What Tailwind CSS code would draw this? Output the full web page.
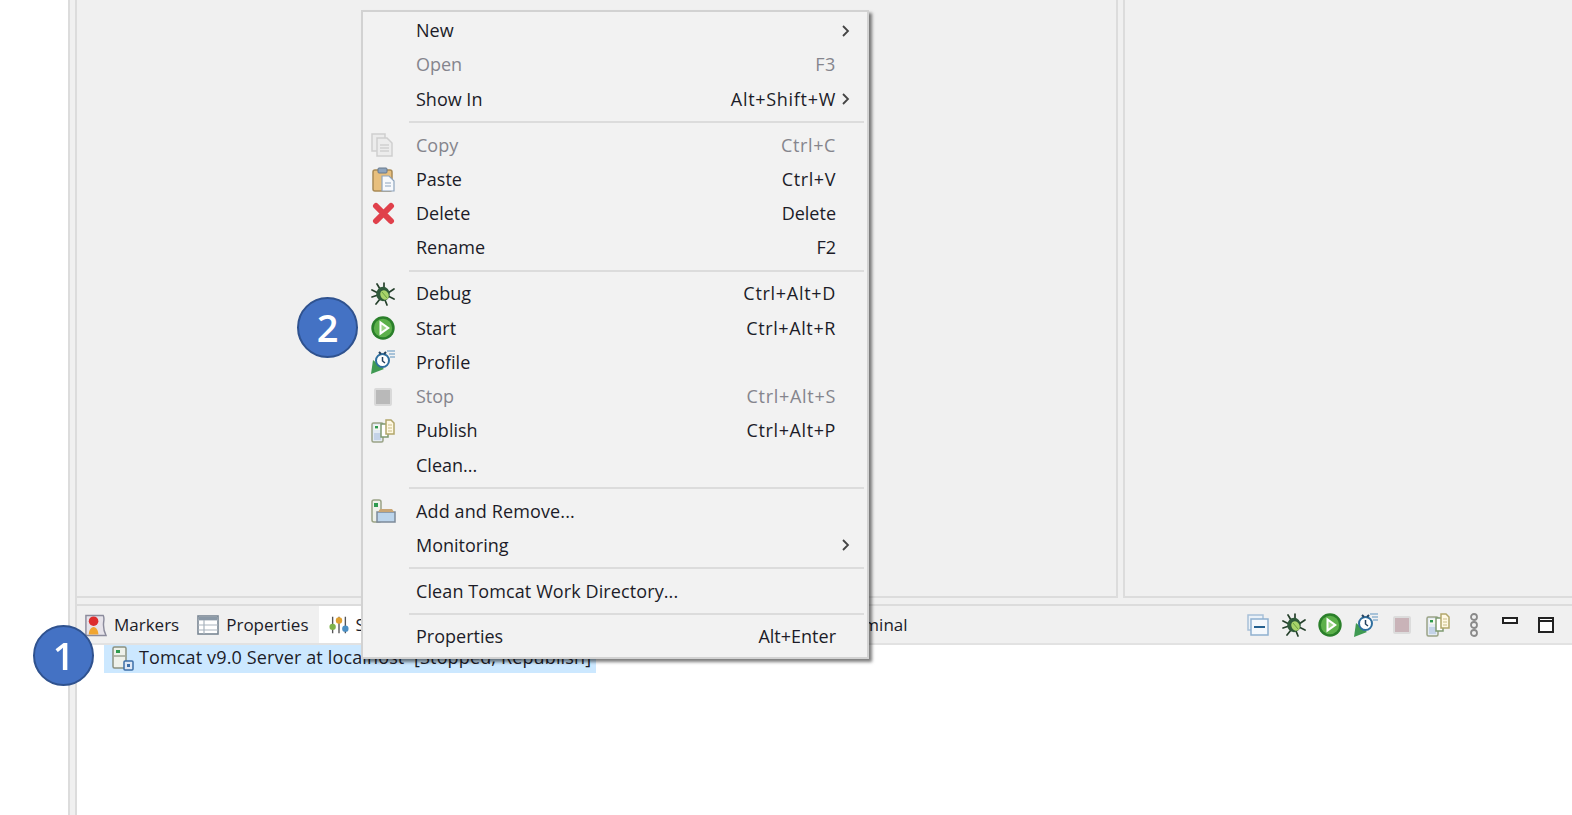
<!DOCTYPE html>
<html lang="en">
<head>
<meta charset="UTF-8">
<title>Servers context menu</title>
<script src="https://cdn.jsdelivr.net/npm/@tailwindcss/browser@4"></script>
</head>
<body class="bg-white">
<!-- shared icons -->
<svg class="hidden">
  <symbol id="i-bug" viewBox="0 0 24 24">
    <g stroke="#26402c" stroke-width="1.7" fill="none" stroke-linecap="round">
      <path d="M6 2l3 5M13 1l0 5M1 8l6 3M23 7l-6 4M1 15l6-2M23 17l-6-3M5 22l4-5M16 23l-2-5"/>
    </g>
    <ellipse cx="12" cy="12" rx="6.8" ry="7.2" fill="#2f5a3a"/>
    <ellipse cx="13.5" cy="13" rx="4" ry="5" fill="#a9d36a" transform="rotate(-30 13.5 13)"/>
    <path d="M11 10l5 6" stroke="#6ba043" stroke-width="1"/>
  </symbol>
  <symbol id="i-start" viewBox="0 0 24 24">
    <circle cx="12" cy="12" r="11.7" fill="#2a7f2a"/>
    <circle cx="12" cy="12" r="9.2" fill="#5cb04a"/>
    <path d="M8.5 4.5l10.5 7.5-10.5 7.5z" fill="#fff"/>
    <path d="M10.5 8.5l5 3.5-5 3.5z" fill="#9ed58a"/>
  </symbol>
  <symbol id="i-profile" viewBox="0 0 24 24">
    <path d="M0 24l2-14 11 9z" fill="#3f9a52"/>
    <circle cx="11.5" cy="10.5" r="6.5" fill="#fff" stroke="#2f6f9f" stroke-width="2"/>
    <path d="M11.5 7v4l2.5 2" stroke="#24425f" stroke-width="1.5" fill="none"/>
    <path d="M8 2l2 2M15 2l-2 2" stroke="#24425f" stroke-width="2"/>
    <path d="M16 1h8M18 4h6M19 7h5" stroke="#8fb3d0" stroke-width="1.3"/>
  </symbol>
  <symbol id="i-publish" viewBox="0 0 24 24">
    <rect x="1" y="4" width="11" height="19" rx="1.5" fill="#e3ebf3" stroke="#9aa386" stroke-width="1.5"/>
    <rect x="3" y="6" width="7" height="5" fill="#f5f7f0"/>
    <rect x="4" y="7" width="3" height="2.4" fill="#2d9a4e"/>
    <rect x="3" y="14" width="7" height="7" fill="#c4d3e8"/>
    <path d="M10 5h7v13h-7z" fill="#fff" stroke="#7f9a72" stroke-width="1.5"/>
    <path d="M15 1h5l3 3v11h-8z" fill="#fff8e3" stroke="#b2a66b" stroke-width="1.5"/>
    <path d="M17 6h4M17 9h4M17 12h4" stroke="#c9bd86"/>
  </symbol>
</svg>

<div class="relative w-[1572px] h-[815px] overflow-hidden flex font-['Open_Sans','Noto_Sans',sans-serif] text-[18px] text-[#1c1c28] blur-[0.4px]">
  <div class="w-[68px] shrink-0"></div>

  <!-- workbench -->
  <div class="flex-1 flex flex-col border-l-2 border-[#dcdcdc] bg-[#f0f0f0] pl-[5px]">
    <div class="flex-1 flex flex-col border-l-2 border-[#dcdcdc]">
      <div class="flex gap-[5px] h-[598px] shrink-0">
        <div class="w-[1041px] border-r-2 border-b-2 border-[#dcdcdc]"></div>
        <div class="flex-1 border-l-2 border-b-2 border-[#dcdcdc]"></div>
      </div>

      <div class="flex-1 flex flex-col mt-[6px] border-t-2 border-[#dcdcdc]">
        <!-- view tabs -->
        <div class="h-[39px] shrink-0 flex items-center border-b-2 border-[#e2e2e2] text-[17px]">
          <div class="flex items-center pl-[7px] gap-[7px]">
            <svg class="w-[23px] h-[24px]" viewBox="0 0 24 24">
              <path d="M2 2h18c3 5-3 9 3 21H2z" fill="#e6e3ea" stroke="#8b8b9c" stroke-width="1.5"/>
              <circle cx="10" cy="8" r="5" fill="#dd2c2c"/>
              <path d="M5 22c0-4 2-8 5-8s5 4 5 8z" fill="#f0a530"/>
            </svg>
            <span>Markers</span>
          </div>
          <div class="flex items-center ml-[18px] gap-[7px]">
            <svg class="w-[22px] h-[20px]" viewBox="0 0 22 20">
              <rect x="1" y="1" width="20" height="18" fill="#fff" stroke="#7a8794" stroke-width="1.6"/>
              <path d="M1 5h20M1 10h20M1 15h20M7 5v14" stroke="#a9b3bd" stroke-width="1.2"/>
              <rect x="2" y="2" width="18" height="3" fill="#8a98a6"/>
            </svg>
            <span>Properties</span>
          </div>
          <div class="flex items-center ml-[10px] h-full w-[120px] bg-white pl-[10px] gap-[7px]">
            <svg class="w-[20px] h-[20px]" viewBox="0 0 22 22">
              <path d="M4 2v18M11 2v18M18 2v18" stroke="#555" stroke-width="1.5"/>
              <circle cx="4" cy="13" r="3.5" fill="#7fb24a"/>
              <circle cx="11" cy="6" r="3.5" fill="#e0a030"/>
              <circle cx="18" cy="15" r="3.5" fill="#4a8fc4"/>
            </svg>
            <span>Servers</span>
          </div>
          <span class="ml-[399px]">Terminal</span>

          <div class="ml-auto flex items-center pr-[8px]">
            <div class="w-[36px] flex justify-center">
              <svg class="w-[22px] h-[22px]" viewBox="0 0 22 22">
                <rect x="1" y="1" width="15" height="15" fill="#eaf1f8" stroke="#a8c0d8" stroke-width="1.5"/>
                <rect x="4" y="5" width="17" height="16" fill="#f4f8fc" stroke="#8fb0cf" stroke-width="1.5"/>
                <path d="M7 13h11" stroke="#24608f" stroke-width="2"/>
              </svg>
            </div>
            <div class="w-[36px] flex justify-center"><svg class="w-[24px] h-[24px]"><use href="#i-bug"/></svg></div>
            <div class="w-[36px] flex justify-center"><svg class="w-[24px] h-[24px]"><use href="#i-start"/></svg></div>
            <div class="w-[36px] flex justify-center"><svg class="w-[24px] h-[24px]"><use href="#i-profile"/></svg></div>
            <div class="w-[36px] flex justify-center">
              <div class="w-[18px] h-[18px] bg-[#c9b3b8] border-2 border-[#dcdcdc] rounded-[2px]"></div>
            </div>
            <div class="w-[36px] flex justify-center"><svg class="w-[24px] h-[24px]"><use href="#i-publish"/></svg></div>
            <div class="w-[36px] flex justify-center">
              <svg class="w-[10px] h-[24px]" viewBox="0 0 10 24" fill="none" stroke="#8a8a8a" stroke-width="1.8">
                <circle cx="5" cy="4" r="3"/><circle cx="5" cy="12" r="3"/><circle cx="5" cy="20" r="3"/>
              </svg>
            </div>
            <div class="w-[36px] flex justify-center -mt-[9px]">
              <div class="w-[16px] h-[7px] border-2 border-[#222] bg-white"></div>
            </div>
            <div class="w-[36px] flex justify-center">
              <div class="w-[16px] h-[16px] border-2 border-[#222] bg-white">
                <div class="h-[3px] border-b-2 border-[#222]"></div>
              </div>
            </div>
          </div>
        </div>

        <!-- server list -->
        <div class="flex-1 bg-white pl-[27px]">
          <div class="w-[492px] h-[28px] flex items-center bg-[#cce8ff] pl-[8px] gap-[5px]">
            <svg class="w-[22px] h-[25px] -mt-[1px]" viewBox="0 0 22 25">
              <rect x="1" y="1" width="13" height="21" rx="1.5" fill="#eef1ea" stroke="#8b9180" stroke-width="1.5"/>
              <rect x="4" y="4" width="4" height="3" fill="#2d9a4e"/>
              <path d="M2 10h11" stroke="#8b9180" stroke-width="1.2"/>
              <rect x="12" y="15" width="9" height="9" rx="1" fill="#dfe8f5" stroke="#3d6fa8" stroke-width="1.5"/>
              <rect x="15" y="18" width="3" height="3" fill="#3d6fa8"/>
            </svg>
            <span class="tracking-[0.14px] -mt-[3px]">Tomcat v9.0 Server at localhost&nbsp; [Stopped, Republish]</span>
          </div>
        </div>
      </div>
    </div>
  </div>

  <!-- context menu -->
  <div class="absolute left-[361px] top-[10px] w-[508px] h-[649px] bg-[#f2f2f2] border-2 border-[#d2d2d2] shadow-[3px_3px_3px_rgba(0,0,0,0.5)] pt-[1.5px]">
    <div class="flex items-center h-[34.3px]"><div class="w-[53px]"></div><span class="flex-1">New</span><span class="w-[31px] pl-[5px]"><svg class="w-[10px] h-[14px]" viewBox="0 0 10 14" fill="none" stroke="#444" stroke-width="1.8"><path d="M2 2l5 5-5 5"/></svg></span></div>
    <div class="flex items-center h-[34.3px] text-[#85858d]"><div class="w-[53px]"></div><span class="flex-1">Open</span><span class="tracking-[0.6px]">F3</span><span class="w-[31px]"></span></div>
    <div class="flex items-center h-[34.3px]"><div class="w-[53px]"></div><span class="flex-1">Show In</span><span class="tracking-[0.7px]">Alt+Shift+W</span><span class="w-[31px] pl-[5px]"><svg class="w-[10px] h-[14px]" viewBox="0 0 10 14" fill="none" stroke="#444" stroke-width="1.8"><path d="M2 2l5 5-5 5"/></svg></span></div>
    <div class="h-[11.5px] flex items-center pl-[46px] pr-[3px]"><div class="w-full h-[2px] bg-[#dcdcdc]"></div></div>

    <div class="flex items-center h-[34.3px] text-[#85858d]">
      <div class="w-[53px] pl-[8px]"><svg class="w-[24px] h-[24px]" viewBox="0 0 24 24" fill="#ececec" stroke="#cfcfcf" stroke-width="1.5"><rect x="1" y="1" width="13" height="17"/><path d="M6 5h10l5 5v13H6z"/><path d="M9 12h9M9 15h9M9 18h9" fill="none"/></svg></div>
      <span class="flex-1">Copy</span><span class="tracking-[0.6px]">Ctrl+C</span><span class="w-[31px]"></span>
    </div>
    <div class="flex items-center h-[34.3px]">
      <div class="w-[53px] pl-[9px]"><svg class="w-[23px] h-[25px]" viewBox="0 0 23 25"><rect x="1" y="3" width="19" height="21" rx="2" fill="#e8bf7d" stroke="#a98a55" stroke-width="1.5"/><rect x="6" y="1" width="9" height="5" rx="1" fill="#8ea4bd" stroke="#66788c"/><path d="M10 9h7l5 5v10H10z" fill="#f7f9fc" stroke="#8ea4bd" stroke-width="1.2"/><path d="M13 16h6M13 19h6" stroke="#8ea4bd"/></svg></div>
      <span class="flex-1">Paste</span><span class="tracking-[0.6px]">Ctrl+V</span><span class="w-[31px]"></span>
    </div>
    <div class="flex items-center h-[34.3px]">
      <div class="w-[53px] pl-[9px]"><svg class="w-[23px] h-[23px]" viewBox="0 0 23 23"><path d="M4 4l15 15M19 4L4 19" stroke="#e0404b" stroke-width="6" stroke-linecap="round"/></svg></div>
      <span class="flex-1">Delete</span><span>Delete</span><span class="w-[31px]"></span>
    </div>
    <div class="flex items-center h-[34.3px]"><div class="w-[53px]"></div><span class="flex-1">Rename</span><span>F2</span><span class="w-[31px]"></span></div>
    <div class="h-[11.5px] flex items-center pl-[46px] pr-[3px]"><div class="w-full h-[2px] bg-[#dcdcdc]"></div></div>

    <div class="flex items-center h-[34.3px]">
      <div class="w-[53px] pl-[8px]"><svg class="w-[24px] h-[24px]"><use href="#i-bug"/></svg></div>
      <span class="flex-1">Debug</span><span class="tracking-[0.7px]">Ctrl+Alt+D</span><span class="w-[31px]"></span>
    </div>
    <div class="flex items-center h-[34.3px]">
      <div class="w-[53px] pl-[8px]"><svg class="w-[24px] h-[24px]"><use href="#i-start"/></svg></div>
      <span class="flex-1">Start</span><span class="tracking-[0.6px]">Ctrl+Alt+R</span><span class="w-[31px]"></span>
    </div>
    <div class="flex items-center h-[34.3px]">
      <div class="w-[53px] pl-[8px]"><svg class="w-[24px] h-[24px]"><use href="#i-profile"/></svg></div>
      <span class="flex-1">Profile</span>
    </div>
    <div class="flex items-center h-[34.3px] text-[#85858d]">
      <div class="w-[53px] pl-[11px]"><div class="w-[18px] h-[18px] bg-[#b9b9b9] border-2 border-[#d9d9d9] rounded-[2px]"></div></div>
      <span class="flex-1">Stop</span><span class="tracking-[0.7px]">Ctrl+Alt+S</span><span class="w-[31px]"></span>
    </div>
    <div class="flex items-center h-[34.3px]">
      <div class="w-[53px] pl-[8px]"><svg class="w-[24px] h-[24px]"><use href="#i-publish"/></svg></div>
      <span class="flex-1">Publish</span><span class="tracking-[0.6px]">Ctrl+Alt+P</span><span class="w-[31px]"></span>
    </div>
    <div class="flex items-center h-[34.3px]"><div class="w-[53px]"></div><span class="flex-1">Clean...</span></div>
    <div class="h-[11.5px] flex items-center pl-[46px] pr-[3px]"><div class="w-full h-[2px] bg-[#dcdcdc]"></div></div>

    <div class="flex items-center h-[34.3px]">
      <div class="w-[53px] pl-[8px]"><svg class="w-[25px] h-[25px]" viewBox="0 0 25 25"><rect x="1" y="1" width="9" height="22" rx="2" fill="#eef1ea" stroke="#9aa386" stroke-width="1.5"/><rect x="3" y="4" width="4" height="4" fill="#2d9a4e"/><path d="M6 13h18v10H6z" fill="#bcd5ec" stroke="#7d8b99" stroke-width="1.5"/><path d="M9 10h12l2 3H7z" fill="#c9a676"/></svg></div>
      <span class="flex-1 tracking-[0.12px]">Add and Remove...</span>
    </div>
    <div class="flex items-center h-[34.3px]"><div class="w-[53px]"></div><span class="flex-1">Monitoring</span><span class="w-[31px] pl-[5px]"><svg class="w-[10px] h-[14px]" viewBox="0 0 10 14" fill="none" stroke="#444" stroke-width="1.8"><path d="M2 2l5 5-5 5"/></svg></span></div>
    <div class="h-[11.5px] flex items-center pl-[46px] pr-[3px]"><div class="w-full h-[2px] bg-[#dcdcdc]"></div></div>

    <div class="flex items-center h-[34.3px]"><div class="w-[53px]"></div><span class="flex-1 tracking-[0.1px]">Clean Tomcat Work Directory...</span></div>
    <div class="h-[11.5px] flex items-center pl-[46px] pr-[3px]"><div class="w-full h-[2px] bg-[#dcdcdc]"></div></div>

    <div class="flex items-center h-[34.3px]"><div class="w-[53px]"></div><span class="flex-1">Properties</span><span>Alt+Enter</span><span class="w-[31px]"></span></div>
  </div>

  <!-- callouts -->
  <div class="absolute left-[33px] top-[625px] w-[61px] h-[61px] rounded-full bg-[#4472c4] border-2 border-[#2f528f] flex items-center justify-center text-white text-[38px] font-semibold">1</div>
  <div class="absolute left-[297px] top-[297px] w-[61px] h-[61px] rounded-full bg-[#4472c4] border-2 border-[#2f528f] flex items-center justify-center text-white text-[38px] font-semibold">2</div>
</div>
</body>
</html>
